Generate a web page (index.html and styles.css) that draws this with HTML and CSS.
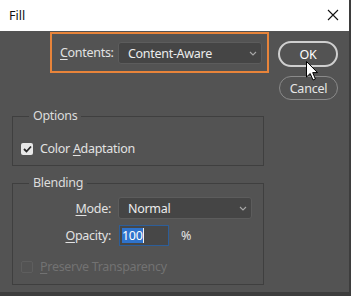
FILE: index.html
```html
<!DOCTYPE html>
<html lang="en">
<head>
    <meta charset="UTF-8">
    <title>Fill</title>
    <link rel="stylesheet" href="styles.css">
</head>
<body>
    <div class="window">
        <div class="titlebar">
            <span class="title">Fill</span>
            <svg class="close" width="12" height="12" viewBox="0 0 12 12">
                <path d="M1 1 L11 11 M11 1 L1 11" stroke="#111" stroke-width="1.1" fill="none"/>
            </svg>
        </div>

        <div class="content">
            <div class="left">
                <div class="contents-box">
                    <label class="field-label"><u>C</u>ontents:</label>
                    <div class="select wide">
                        <span>Content-Aware</span>
                        <svg class="chevron" width="8" height="5" viewBox="0 0 8 5">
                            <path d="M1 1 L4 4 L7 1" stroke="#a8a8a8" stroke-width="1.1" fill="none"/>
                        </svg>
                    </div>
                </div>

                <fieldset class="group options">
                    <legend>Options</legend>
                    <div class="check-row">
                        <span class="checkbox checked">
                            <svg width="9" height="8" viewBox="0 0 9 8">
                                <path d="M1 4 L3.5 6.5 L8 1.5" stroke="#2a2a2a" stroke-width="1.8" fill="none"/>
                            </svg>
                        </span>
                        <span>Color <u>A</u>daptation</span>
                    </div>
                </fieldset>

                <fieldset class="group blending">
                    <legend>Blending</legend>
                    <div class="form-row">
                        <label class="row-label"><u>M</u>ode:</label>
                        <div class="select mode">
                            <span>Normal</span>
                            <svg class="chevron" width="8" height="5" viewBox="0 0 8 5">
                                <path d="M1 1 L4 4 L7 1" stroke="#a8a8a8" stroke-width="1.1" fill="none"/>
                            </svg>
                        </div>
                    </div>
                    <div class="form-row opacity-row">
                        <label class="row-label"><u>O</u>pacity:</label>
                        <div class="num-input"><span class="sel">100</span><span class="caret"></span></div>
                        <span class="unit">%</span>
                    </div>
                    <div class="check-row disabled">
                        <span class="checkbox"></span>
                        <span><u>P</u>reserve Transparency</span>
                    </div>
                </fieldset>
            </div>

            <div class="buttons">
                <button class="btn primary">OK</button>
                <button class="btn">Cancel</button>
            </div>
        </div>

        <svg class="cursor" width="13" height="20" viewBox="0 0 13 20">
            <path d="M0.5 0.5 L0.5 16 L4.2 12.5 L7 19 L9.4 18 L6.7 11.6 L11.5 11.6 Z" fill="#fff" stroke="#000" stroke-width="1"/>
        </svg>
    </div>
</body>
</html>
```

FILE: styles.css
```css
body {
    margin: 0;
    background-color: #3d3d3d;
    font-family: 'Noto Sans', 'Open Sans', sans-serif;
    font-size: 12.5px;
    letter-spacing: -0.3px;
    color: #e2e2e2;
}
u {
    text-decoration-thickness: 1px;
    text-underline-offset: 2px;
}
.window {
    position: relative;
    width: 349px;
    height: 292px;
    background-color: #535353;
    overflow: hidden;
}
.titlebar {
    height: 31px;
    background-color: #fff;
    display: flex;
    align-items: center;
    justify-content: space-between;
    padding: 0 10px 0 9px;
    box-sizing: border-box;
}
.title {
    color: #111;
    font-size: 12.5px;
    letter-spacing: 0;
    margin-top: -1px;
}
.close {
    margin-top: -2px;
}
.content {
    display: flex;
    padding: 1px 0 0 12px;
}
.left {
    width: 258px;
}
.contents-box {
    margin-left: 38px;
    width: 219px;
    height: 41px;
    box-sizing: border-box;
    border: 2px solid #e8843a;
    display: flex;
    align-items: center;
    padding: 0 0 0 8px;
}
.field-label {
    width: 58px;
}
.select {
    height: 22px;
    box-sizing: border-box;
    background-color: #454545;
    border: 1px solid #5c5c5c;
    border-radius: 3px;
    display: flex;
    align-items: center;
    justify-content: space-between;
    padding: 0 4px 0 9px;
    color: #ececec;
}
.select.wide {
    width: 144px;
    margin-top: 1px;
}
.select.mode {
    width: 134px;
}
.chevron {
    margin-top: 1px;
}
.group {
    margin: 0;
    width: 252px;
    box-sizing: border-box;
    border: 1px solid #3f3f3f;
    padding: 0 6px 0 16px;
}
.group legend {
    padding: 0 4px;
    line-height: 16px;
    color: #dcdcdc;
}
.options {
    margin-top: 35px;
    height: 58px;
    padding-top: 14px;
}
.blending {
    margin-top: 9px;
    height: 110px;
    padding-top: 6px;
}
.check-row {
    display: flex;
    align-items: center;
    gap: 7px;
    height: 20px;
    margin-left: -8px;
}
.checkbox {
    width: 12px;
    height: 12px;
    border-radius: 2px;
    box-sizing: border-box;
    display: flex;
    align-items: center;
    justify-content: center;
    margin-top: 1px;
}
.checkbox.checked {
    background-color: #e8e8e8;
}
.disabled {
    color: #727272;
    margin-top: 10px;
}
.disabled .checkbox {
    border: 1px solid #5e5e5e;
}
.form-row {
    display: flex;
    align-items: center;
    height: 22px;
}
.row-label {
    width: 88px;
    text-align: right;
    margin-left: -6px;
    margin-right: 7px;
}
.opacity-row {
    margin-top: 6px;
    height: 21px;
}
.num-input {
    width: 50px;
    height: 21px;
    box-sizing: border-box;
    border: 1px solid #2d5e99;
    background-color: #474747;
    display: flex;
    align-items: center;
    padding-left: 2px;
    margin-left: 1px;
}
.sel {
    background-color: #2f73cc;
    color: #fff;
    line-height: 15px;
}
.caret {
    width: 1px;
    height: 15px;
    background-color: #f0f0f0;
}
.unit {
    margin-left: 12px;
}
.buttons {
    display: flex;
    flex-direction: column;
    margin-left: 8px;
    margin-top: 9px;
    gap: 9px;
}
.btn {
    width: 60px;
    height: 26px;
    border-radius: 13px;
    border: 1px solid #8a8a8a;
    background-color: transparent;
    color: #e6e6e6;
    font-family: inherit;
    font-size: 12.5px;
    letter-spacing: -0.2px;
    padding: 0;
}
.btn.primary {
    border: 2px solid #cfcfcf;
    color: #fff;
}
.btn + .btn {
    height: 24px;
    width: 59px;
    margin-left: 1px;
}
.cursor {
    position: absolute;
    left: 306px;
    top: 61px;
}
```
